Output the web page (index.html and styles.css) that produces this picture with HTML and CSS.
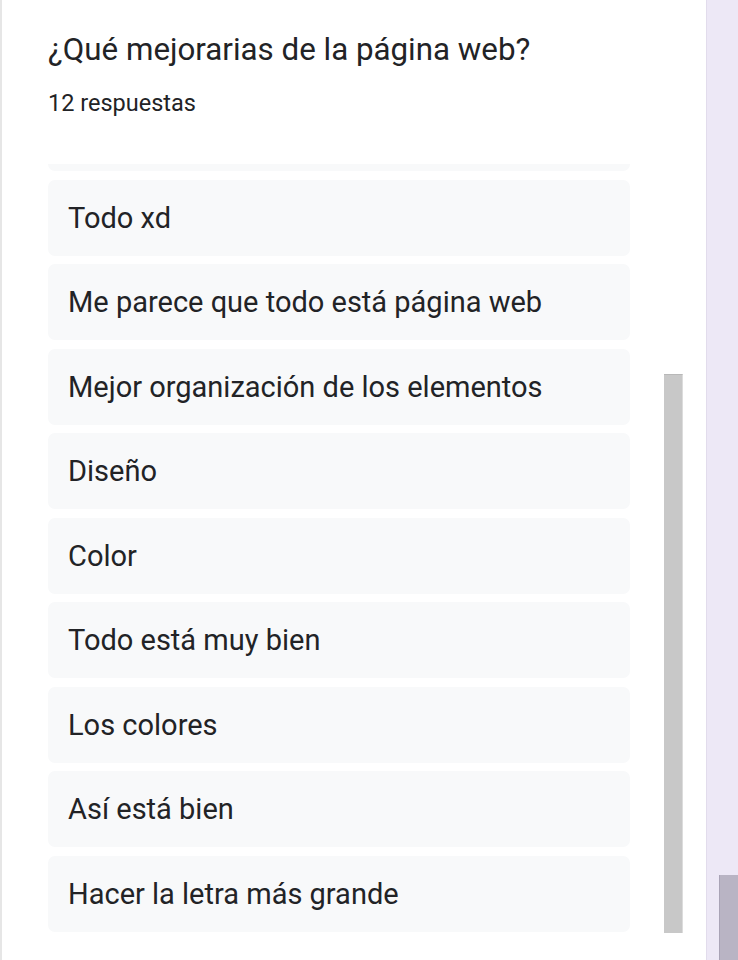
FILE: index.html
```html
<!DOCTYPE html>
<html lang="es">
<head>
<meta charset="utf-8">
<link rel="stylesheet" href="styles.css">
</head>
<body>
<div class="page">
  <main class="card">
    <h1 class="title">¿Qué mejorarias de la página web?</h1>
    <p class="count">12 respuestas</p>
    <div class="answers">
      <div class="list">
        <div class="item item-cut"></div>
        <div class="item">Todo xd</div>
        <div class="item">Me parece que todo está página web</div>
        <div class="item">Mejor organización de los elementos</div>
        <div class="item">Diseño</div>
        <div class="item">Color</div>
        <div class="item">Todo está muy bien</div>
        <div class="item">Los colores</div>
        <div class="item">Así está bien</div>
        <div class="item">Hacer la letra más grande</div>
      </div>
      <div class="track"><div class="thumb"></div></div>
    </div>
  </main>
  <aside class="side">
    <div class="side-thumb"></div>
  </aside>
</div>
</body>
</html>
```
FILE: styles.css
```css
html, body {
  margin: 0;
  padding: 0;
  height: 960px;
  overflow: hidden;
  background: #ede8f6;
}
.page {
  display: flex;
  height: 960px;
  font-family: Roboto, "Liberation Sans", sans-serif;
  color: #222326;
}
.card {
  width: 707px;
  background: #ffffff;
  border-left: 2px solid #e6e6e6;
  border-right: 1px solid #e2dcec;
  box-sizing: border-box;
  padding: 30px 0 0 46px;
}
.title {
  margin: 0;
  font-size: 31.3px;
  font-weight: 400;
  line-height: 40px;
}
.count {
  margin: 18px 0 0;
  font-size: 23.5px;
  line-height: 30px;
}
.answers {
  margin-top: 46px;
  display: flex;
  height: 776px;
  overflow: hidden;
}
.list {
  width: 582px;
  display: flex;
  flex-direction: column;
  gap: 8.5px;
  flex-shrink: 0;
}
.item {
  flex-shrink: 0;
  height: 76px;
  background: #f8f9fa;
  border-radius: 7px;
  display: flex;
  align-items: center;
  padding-left: 20px;
  font-size: 29px;
}
.item-cut {
  height: 7px;
  border-radius: 0 0 7px 7px;
}
.track {
  margin-left: 34px;
  padding-top: 210px;
}
.thumb {
  width: 18px;
  height: 558px;
  background: #c8c8c8;
  border-right: 1px solid #dcdcdc;
  border-top: 1px solid #b8b8b8;
}
.side {
  flex: 1;
  background: #ede8f6;
  display: flex;
  justify-content: flex-end;
  padding-top: 875px;
}
.side-thumb {
  width: 18px;
  height: 85px;
  background: #b9b4c4;
  border-left: 1px solid #a9a3b6;
}
```
